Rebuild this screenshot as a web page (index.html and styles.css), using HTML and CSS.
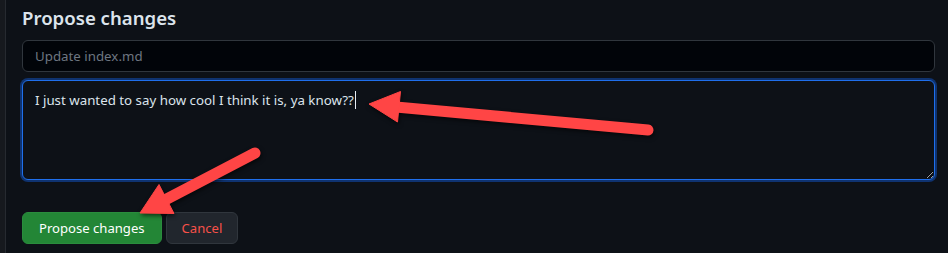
FILE: index.html
```html
<!DOCTYPE html>
<html lang="en">
<head>
    <meta charset="UTF-8">
    <meta name="viewport" content="width=device-width, initial-scale=1.0">
    <title>Propose changes</title>
    <link rel="stylesheet" href="styles.css">
</head>
<body>
    <div class="sidebar"></div>
    <main>
        <h2>Propose changes</h2>
        <input type="text" class="commit-title" placeholder="Update index.md">
        <div class="commit-body">I just wanted to say how cool I think it is, ya know??<span class="caret"></span></div>
        <div class="actions">
            <button class="btn-primary">Propose changes</button>
            <button class="btn-cancel">Cancel</button>
        </div>
    </main>

    <svg class="arrows" width="948" height="253" viewBox="0 0 948 253">
        <g class="arrow">
            <line x1="648" y1="130" x2="396" y2="107" />
            <polygon points="369,104 400.5,91.5 397.5,122" />
        </g>
        <g class="arrow">
            <line x1="255" y1="153" x2="163" y2="201" />
            <polygon points="140,213 159,184.5 174,213.5" />
        </g>
    </svg>
</body>
</html>
```

FILE: styles.css
```css
body {
    margin: 0;
    display: flex;
    min-height: 253px;
    background-color: #0d1117;
    color: #dce4ec;
    font-family: "Noto Sans", "Open Sans", sans-serif;
    color-scheme: dark;
    position: relative;
}

.sidebar {
    width: 5px;
    background-color: #16191e;
    border-right: 1px solid #262a30;
}

main {
    flex: 1;
    padding: 0 13px 0 16px;
}

h2 {
    margin: 3px 0 7px;
    font-size: 18.6px;
    line-height: 30px;
    font-weight: 600;
}

.commit-title {
    display: block;
    box-sizing: border-box;
    width: 100%;
    height: 32px;
    padding: 0 12px;
    background-color: #010409;
    border: 1px solid #30363d;
    border-radius: 6px;
    color: #dce4ec;
    font-family: inherit;
    font-size: 13.3px;
}

.commit-title::placeholder {
    color: #6e7681;
}

.commit-body {
    box-sizing: border-box;
    height: 100px;
    margin-top: 8px;
    padding: 9px 12px 8px;
    background-color: #0d1117;
    border: 1px solid #1f6feb;
    border-radius: 6px;
    box-shadow: 0 0 0 2px #0f3370;
    font-size: 13.3px;
    line-height: 20px;
    resize: both;
    overflow: auto;
}

.caret {
    display: inline-block;
    width: 1px;
    height: 18px;
    margin-left: 1px;
    vertical-align: -4px;
    background-color: #e6edf3;
}

.actions {
    display: flex;
    gap: 4px;
    margin-top: 32px;
}

.actions button {
    height: 32px;
    padding: 0 16px;
    border-radius: 6px;
    font-family: inherit;
    font-size: 13.1px;
    cursor: pointer;
}

.btn-primary {
    background-color: #238636;
    border: 1px solid #2a8c3d;
    color: #ffffff;
}

.btn-cancel {
    padding: 0 15px;
    background-color: #21262d;
    border: 1px solid #30363d;
    color: #f85149;
}

.actions .btn-cancel {
    padding: 0 15px;
}

.arrows {
    position: absolute;
    left: 0;
    top: 0;
    pointer-events: none;
}

.arrow {
    fill: #ff4545;
    stroke: #ff4545;
    filter: drop-shadow(1px 2px 2px rgba(0, 0, 0, 0.6));
}

.arrow line {
    stroke-width: 11;
    stroke-linecap: round;
}

.arrow polygon {
    stroke-width: 1;
    stroke-linejoin: round;
}
```
